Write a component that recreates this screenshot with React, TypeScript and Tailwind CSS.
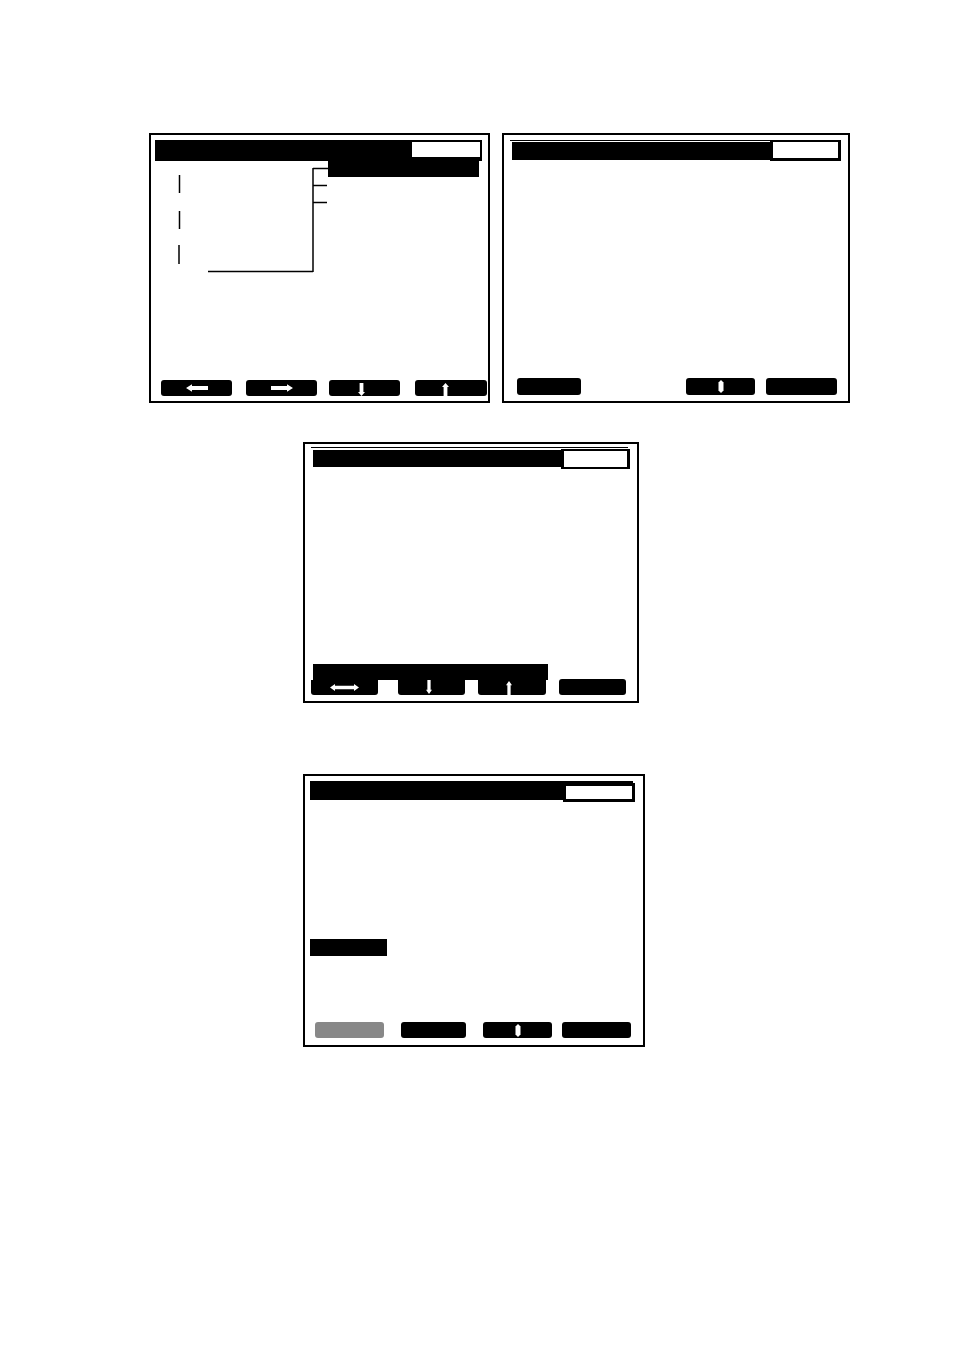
import React from "react";

const LeftArrow = () => (
  <svg width="22" height="8" viewBox="0 0 22 8" className="block">
    <polygon points="0,4 6,0.3 6,2 22,2 22,6 6,6 6,7.7" fill="#fff" />
  </svg>
);
const RightArrow = () => (
  <svg width="22" height="8" viewBox="0 0 22 8" className="block">
    <polygon points="22,4 16,0.3 16,2 0,2 0,6 16,6 16,7.7" fill="#fff" />
  </svg>
);
const DownArrow = ({ w = 7, h = 13 }: { w?: number; h?: number }) => (
  <svg width={w} height={h} viewBox="0 0 7 13" className="block" preserveAspectRatio="none">
    <polygon points="1.6,0 5.4,0 5.4,9 7,9 3.5,13 0,9 1.6,9" fill="#fff" />
  </svg>
);
const UpArrow = ({ w = 7, h = 13 }: { w?: number; h?: number }) => (
  <svg width={w} height={h} viewBox="0 0 7 13" className="block" preserveAspectRatio="none">
    <polygon points="1.6,13 5.4,13 5.4,4 7,4 3.5,0 0,4 1.6,4" fill="#fff" />
  </svg>
);
const Capsule = () => (
  <svg width="6" height="13" viewBox="0 0 6 13" className="block">
    <path d="M3 0 L5.5 2.5 L5.5 10.5 L3 13 L0.5 10.5 L0.5 2.5 Z" fill="#fff" />
  </svg>
);
const DoubleArrow = () => (
  <svg width="29" height="7" viewBox="0 0 29 7" className="block">
    <polygon points="0,3.5 5,0 5,1.8 24,1.8 24,0 29,3.5 24,7 24,5.2 5,5.2 5,7" fill="#fff" />
  </svg>
);

export default function App() {
  return (
    <div className="w-[954px] h-[1350px] bg-white pt-[133px]">
      {/* Row 1 */}
      <div className="flex pl-[149px] gap-[12px]">
        {/* Panel 1 */}
        <div className="grid w-[341px] h-[270px] border-2 border-black">
          <div className="col-start-1 row-start-1 flex flex-col h-full">
            <div className="mt-[5px] ml-[4px] w-[327px] h-[21px] bg-black flex justify-end pt-[2px] pr-[2px]">
              <div className="w-[68px] h-[15px] bg-white" />
            </div>
            <div className="ml-[177px] w-[151px] h-[16px] bg-black" />
            <div className="mt-auto mb-[5px] flex">
              <div className="ml-[10px] w-[71px] h-[16px] bg-black rounded-[3px] flex items-center justify-center">
                <LeftArrow />
              </div>
              <div className="ml-[14px] w-[71px] h-[16px] bg-black rounded-[3px] flex items-center justify-center">
                <RightArrow />
              </div>
              <div className="ml-[12px] w-[71px] h-[16px] bg-black rounded-[3px] flex items-end justify-center pr-[6px]">
                <DownArrow />
              </div>
              <div className="ml-[15px] w-[72px] h-[16px] bg-black rounded-[3px] flex items-end justify-center pr-[11px]">
                <UpArrow />
              </div>
            </div>
          </div>
          <svg
            className="col-start-1 row-start-1 pointer-events-none"
            width="337"
            height="266"
            viewBox="0 0 337 266"
          >
            <g stroke="#000" strokeWidth="1.5" fill="none">
              <line x1="162" y1="33" x2="162" y2="137" />
              <line x1="162" y1="33.5" x2="177" y2="33.5" />
              <line x1="162" y1="50.5" x2="176" y2="50.5" />
              <line x1="162" y1="67.5" x2="176" y2="67.5" />
              <line x1="57" y1="136.5" x2="162" y2="136.5" />
              <line x1="28.5" y1="40" x2="28.5" y2="58" />
              <line x1="28.5" y1="76" x2="28.5" y2="94" />
              <line x1="28" y1="110" x2="28" y2="129" />
            </g>
          </svg>
        </div>

        {/* Panel 2 */}
        <div className="w-[348px] h-[270px] border-2 border-black flex flex-col">
          <div className="mt-[5px] flex">
            <div className="ml-[6px] w-[260px] flex flex-col">
              <div className="h-[1px] bg-black" />
              <div className="mt-[1px] ml-[2px] w-[258px] h-[18px] bg-black" />
            </div>
            <div className="w-[71px] h-[21px] bg-white border-black border-x-[3px] border-t-2 border-b-[3px]" />
          </div>
          <div className="mt-auto mb-[6px] flex">
            <div className="ml-[13px] w-[64px] h-[17px] bg-black rounded-[3px]" />
            <div className="ml-[105px] w-[69px] h-[17px] bg-black rounded-[3px] flex items-center justify-center">
              <Capsule />
            </div>
            <div className="ml-[11px] w-[71px] h-[17px] bg-black rounded-[3px]" />
          </div>
        </div>
      </div>

      {/* Panel 3 */}
      <div className="mt-[39px] ml-[303px] w-[336px] h-[261px] border-2 border-black flex flex-col">
        <div className="mt-[3px] ml-[6px] w-[317px] h-[1px] bg-black" />
        <div className="mt-[1px] ml-[8px] flex">
          <div className="mt-[1px] w-[248px] h-[17px] bg-black" />
          <div className="w-[69px] h-[20px] bg-white border-black border-x-[3px] border-y-2" />
        </div>
        <div className="mt-auto ml-[8px] w-[235px] h-[16px] bg-black" />
        <div className="mb-[6px] flex">
          <div className="ml-[6px] w-[67px] h-[15px] bg-black rounded-b-[3px] flex items-center justify-center">
            <DoubleArrow />
          </div>
          <div className="ml-[20px] w-[67px] h-[15px] bg-black rounded-b-[3px] flex items-start justify-center pr-[6px]">
            <DownArrow w={6} h={14} />
          </div>
          <div className="ml-[13px] w-[68px] h-[15px] bg-black rounded-b-[3px] flex items-end justify-center pr-[6px]">
            <UpArrow w={6} h={14} />
          </div>
          <div className="ml-[13px] -mt-[1px] w-[67px] h-[16px] bg-black rounded-[3px]" />
        </div>
      </div>

      {/* Panel 4 */}
      <div className="mt-[71px] ml-[303px] w-[342px] h-[273px] border-2 border-black flex flex-col">
        <div className="mt-[5px] ml-[5px] w-[323px] h-[19px] bg-black flex justify-end">
          <div className="mt-[2px] -mr-[2px] w-[72px] h-[19px] bg-white border-[3px] border-black shrink-0" />
        </div>
        <div className="mt-[139px] ml-[5px] w-[77px] h-[17px] bg-black" />
        <div className="mt-auto mb-[7px] flex">
          <div className="ml-[10px] w-[69px] h-[16px] bg-[#888888] rounded-[3px]" />
          <div className="ml-[17px] w-[65px] h-[16px] bg-black rounded-[3px]" />
          <div className="ml-[17px] w-[69px] h-[16px] bg-black rounded-[3px] flex items-center justify-center">
            <Capsule />
          </div>
          <div className="ml-[10px] w-[69px] h-[16px] bg-black rounded-[3px]" />
        </div>
      </div>
    </div>
  );
}
